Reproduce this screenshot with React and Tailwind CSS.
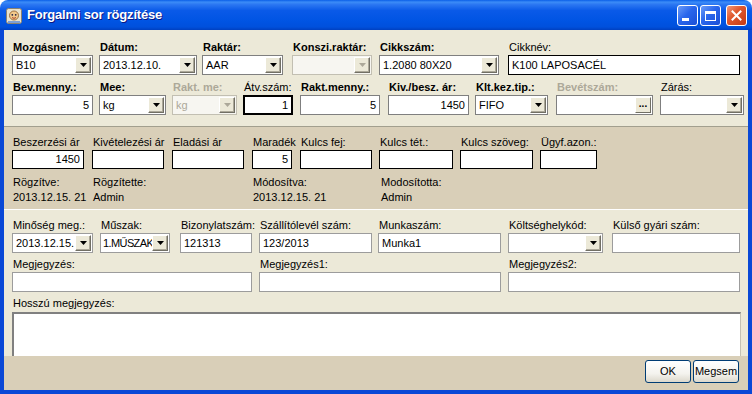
import React from 'react';

const borders = {
  gray: 'border border-[#7f7f7f]',
  light: 'border border-[#9c9c9c]',
  black: 'border border-black',
  thick: 'border-2 border-black',
  dis: 'border border-[#c2bfb2]',
};

const Arrow = ({ disabled }) => (
  <div className="w-[16px] h-[16px] mr-[1px] shrink-0 flex items-center justify-center bg-[#ece9d8] border border-t-white border-l-white border-r-[#716f64] border-b-[#716f64] shadow-[inset_-1px_-1px_0_#aca899]">
    <svg width="7" height="4" viewBox="0 0 7 4">
      <path d="M0 0h7L3.5 4z" fill={disabled ? '#aca899' : '#000'} />
    </svg>
  </div>
);

const Box = ({ w, value, right, tone = 'gray', h = 'h-[20px]' }) => (
  <div
    className={`${w} ${h} bg-white flex items-center px-[3px] whitespace-nowrap overflow-hidden ${
      right ? 'justify-end' : ''
    } ${borders[tone]}`}
  >
    {value}
  </div>
);

const Combo = ({ w, value, disabled, tone = 'gray', tight }) => (
  <div
    className={`${w} h-[20px] flex items-center ${
      disabled ? 'bg-[#f7f6f1] text-[#aca899]' : 'bg-white'
    } ${borders[disabled ? 'dis' : tone]}`}
  >
    <span
      className={`flex-1 whitespace-nowrap overflow-hidden ${
        tight ? 'pl-[2px] tracking-[-0.6px]' : 'pl-[3px]'
      }`}
    >
      {value}
    </span>
    <Arrow disabled={disabled} />
  </div>
);

const Field = ({ w, label, bold, disabled, children }) => (
  <div className={`${w} shrink-0 flex flex-col gap-[1px]`}>
    <div
      className={`h-[14px] leading-[14px] pl-[1px] whitespace-nowrap ${bold ? 'font-bold' : ''} ${
        disabled ? 'text-[#aca899]' : ''
      }`}
    >
      {label}
    </div>
    {children}
  </div>
);

const TitleBtn = ({ kind }) => (
  <div
    className={`w-[21px] h-[21px] rounded-[3px] border border-white flex items-center justify-center ${
      kind === 'close'
        ? 'bg-[linear-gradient(135deg,#f09a7a_0%,#e0592f_40%,#c63a14_100%)]'
        : 'bg-[linear-gradient(135deg,#6b9cf8_0%,#2a66ec_45%,#1a4fd6_100%)]'
    }`}
  >
    {kind === 'min' && <div className="w-[7px] h-[3px] bg-white self-end mb-[4px] mr-[5px]" />}
    {kind === 'max' && <div className="w-[11px] h-[10px] border border-white border-t-[3px]" />}
    {kind === 'close' && (
      <svg width="11" height="11" viewBox="0 0 11 11">
        <path d="M1.5 1.5l8 8M9.5 1.5l-8 8" stroke="#fff" strokeWidth="2" strokeLinecap="square" />
      </svg>
    )}
  </div>
);

const XpButton = ({ children }) => (
  <div className="w-[46px] h-[23px] rounded-[3px] border border-[#003c74] flex items-center justify-center bg-[linear-gradient(to_bottom,#ffffff_0%,#f4f3ee_60%,#dcd8cc_100%)]">
    {children}
  </div>
);

export default function App() {
  return (
    <div className="w-[752px] h-[394px] flex flex-col bg-white font-['Liberation_Sans',Arial,sans-serif] text-[11px] text-black overflow-hidden">
      <div className="h-[30px] shrink-0 rounded-t-[8px] flex items-center pl-[6px] pr-[5px] bg-[linear-gradient(to_bottom,#0a5fe8_0%,#3b8cf7_7%,#2b77f2_15%,#0a5ae8_35%,#0054e3_70%,#0050dc_90%,#0040c0_100%)]">
        <svg width="16" height="16" viewBox="0 0 16 16" className="mt-[2px]">
          <rect x="0.5" y="0.5" width="15" height="15" rx="2" fill="#e9e2cc" stroke="#8a8270" />
          <circle cx="8" cy="7.5" r="4.5" fill="#f3c98b" stroke="#8a5a2a" strokeWidth="0.8" />
          <circle cx="6.3" cy="6.8" r="0.9" fill="#224" />
          <circle cx="9.7" cy="6.8" r="0.9" fill="#224" />
          <path d="M6 9.6q2 1.4 4 0" stroke="#a03020" strokeWidth="0.9" fill="none" />
          <path d="M2 14h12" stroke="#5a8ad8" strokeWidth="1.5" />
        </svg>
        <div className="ml-[5px] text-white font-bold text-[13px] tracking-[-0.2px] [text-shadow:1px_1px_0_#0a1883]">
          Forgalmi sor rögzítése
        </div>
        <div className="flex-1" />
        <div className="flex items-center gap-[2px] mt-[1px]">
          <TitleBtn kind="min" />
          <TitleBtn kind="max" />
          <div className="w-[1px]" />
          <TitleBtn kind="close" />
        </div>
      </div>

      <div className="flex-1 min-h-0 flex flex-col border-x-4 border-b-4 border-[#0a48d6]">
        {/* felső rész */}
        <div className="bg-[#ece9d8] pl-[8px] pt-[10px] pb-[11px] flex flex-col gap-[5px]">
          <div className="flex">
            <Field w="w-[87px]" label="Mozgásnem:" bold>
              <Combo w="w-[81px]" value="B10" />
            </Field>
            <Field w="w-[103px]" label="Dátum:" bold>
              <Combo w="w-[98px]" value="2013.12.10." />
            </Field>
            <Field w="w-[90px]" label="Raktár:" bold>
              <Combo w="w-[81px]" value="AAR" />
            </Field>
            <Field w="w-[87px]" label="Konszi.raktár:" bold>
              <Combo w="w-[80px]" value="" disabled />
            </Field>
            <Field w="w-[129px]" label="Cikkszám:" bold>
              <Combo w="w-[120px]" value="1.2080 80X20" />
            </Field>
            <Field w="w-[236px]" label="Cikknév:">
              <Box w="w-[232px]" value="K100 LAPOSACÉL" tone="black" />
            </Field>
          </div>
          <div className="flex">
            <Field w="w-[87px]" label="Bev.menny.:" bold>
              <Box w="w-[81px]" value="5" right />
            </Field>
            <Field w="w-[73px]" label="Mee:" bold>
              <Combo w="w-[67px]" value="kg" />
            </Field>
            <Field w="w-[71px]" label="Rakt. me:" bold disabled>
              <Combo w="w-[65px]" value="kg" disabled />
            </Field>
            <Field w="w-[57px]" label="Átv.szám:">
              <Box w="w-[50px]" value="1" right tone="thick" />
            </Field>
            <Field w="w-[88px]" label="Rakt.menny.:" bold>
              <Box w="w-[80px]" value="5" right />
            </Field>
            <Field w="w-[87px]" label="Kiv./besz. ár:" bold>
              <Box w="w-[81px]" value="1450" right />
            </Field>
            <Field w="w-[81px]" label="Klt.kez.tip.:" bold>
              <Combo w="w-[73px]" value="FIFO" />
            </Field>
            <Field w="w-[104px]" label="Bevétszám:" bold disabled>
              <div className="w-[97px] h-[20px] bg-white flex items-center border border-[#7f7f7f]">
                <span className="flex-1" />
                <div className="w-[16px] h-[16px] mr-[1px] flex items-center justify-center bg-[#ece9d8] border border-t-white border-l-white border-r-[#716f64] border-b-[#716f64] font-bold text-[10px] leading-[8px] pb-[3px]">
                  ...
                </div>
              </div>
            </Field>
            <Field w="w-[84px]" label="Zárás:">
              <Combo w="w-[84px]" value="" />
            </Field>
          </div>
        </div>

        {/* középső rész */}
        <div className="bg-[#d9cfb8] border-t border-[#a29f8e] pl-[8px] pt-[8px] pb-[5px] flex flex-col">
          <div className="flex">
            <Field w="w-[80px]" label="Beszerzési ár">
              <Box w="w-[72px]" h="h-[19px]" value="1450" right tone="black" />
            </Field>
            <Field w="w-[80px]" label="Kivételezési ár">
              <Box w="w-[72px]" h="h-[19px]" value="" tone="black" />
            </Field>
            <Field w="w-[80px]" label="Eladási ár">
              <Box w="w-[72px]" h="h-[19px]" value="" tone="black" />
            </Field>
            <Field w="w-[48px]" label="Maradék">
              <Box w="w-[40px]" h="h-[19px]" value="5" right tone="black" />
            </Field>
            <Field w="w-[79px]" label="Kulcs fej:">
              <Box w="w-[72px]" h="h-[19px]" value="" tone="black" />
            </Field>
            <Field w="w-[81px]" label="Kulcs tét.:">
              <Box w="w-[74px]" h="h-[19px]" value="" tone="black" />
            </Field>
            <Field w="w-[80px]" label="Kulcs szöveg:">
              <Box w="w-[73px]" h="h-[19px]" value="" tone="black" />
            </Field>
            <Field w="w-[60px]" label="Ügyf.azon.:">
              <Box w="w-[57px]" h="h-[19px]" value="" tone="black" />
            </Field>
          </div>
          <div className="flex mt-[6px] leading-[14px]">
            <div className="w-[80px] flex flex-col gap-[1px]">
              <div className="h-[14px] pl-[1px]">Rögzítve:</div>
              <div className="h-[14px] pl-[1px] whitespace-nowrap">2013.12.15. 21</div>
            </div>
            <div className="w-[160px] flex flex-col gap-[1px]">
              <div className="h-[14px] pl-[1px]">Rögzítette:</div>
              <div className="h-[14px] pl-[1px]">Admin</div>
            </div>
            <div className="w-[128px] flex flex-col gap-[1px]">
              <div className="h-[14px] pl-[1px]">Módosítva:</div>
              <div className="h-[14px] pl-[1px] whitespace-nowrap">2013.12.15. 21</div>
            </div>
            <div className="w-[100px] flex flex-col gap-[1px]">
              <div className="h-[14px] pl-[1px]">Modosította:</div>
              <div className="h-[14px] pl-[1px]">Admin</div>
            </div>
          </div>
        </div>

        {/* alsó rész */}
        <div className="bg-[#ece9d8] border-t border-white pl-[8px] pt-[8px] flex flex-col">
          <div className="flex">
            <Field w="w-[88px]" label="Minőség meg.:">
              <Combo w="w-[81px]" value="2013.12.15." tone="light" />
            </Field>
            <Field w="w-[80px]" label="Műszak:">
              <Combo w="w-[70px]" value="1.MŰSZAK" tone="light" tight />
            </Field>
            <Field w="w-[79px]" label="Bizonylatszám:">
              <Box w="w-[72px]" value="121313" tone="light" />
            </Field>
            <Field w="w-[119px]" label="Szállítólevél szám:">
              <Box w="w-[113px]" value="123/2013" tone="light" />
            </Field>
            <Field w="w-[130px]" label="Munkaszám:">
              <Box w="w-[123px]" value="Munka1" tone="light" />
            </Field>
            <Field w="w-[104px]" label="Költséghelykód:">
              <Combo w="w-[95px]" value="" tone="light" />
            </Field>
            <Field w="w-[128px]" label="Külső gyári szám:">
              <Box w="w-[128px]" value="" tone="light" />
            </Field>
          </div>
          <div className="flex mt-[4px]">
            <Field w="w-[247px]" label="Megjegyzés:">
              <Box w="w-[240px]" value="" tone="light" />
            </Field>
            <Field w="w-[249px]" label="Megjegyzés1:">
              <Box w="w-[242px]" value="" tone="light" />
            </Field>
            <Field w="w-[232px]" label="Megjegyzés2:">
              <Box w="w-[232px]" value="" tone="light" />
            </Field>
          </div>
          <div className="h-[14px] leading-[14px] pl-[1px] mt-[4px]">Hosszú megjegyzés:</div>
          <div className="w-[729px] h-[44px] mt-[2px] bg-white border-t-2 border-l-2 border-[#808080] border-r border-r-[#c4c1b4]" />
        </div>

        <div className="flex-1 bg-[#d9cfb8] flex justify-end items-start pt-[4px] pr-[9px] gap-[2px]">
          <XpButton>OK</XpButton>
          <XpButton>Megsem</XpButton>
        </div>
      </div>
    </div>
  );
}
